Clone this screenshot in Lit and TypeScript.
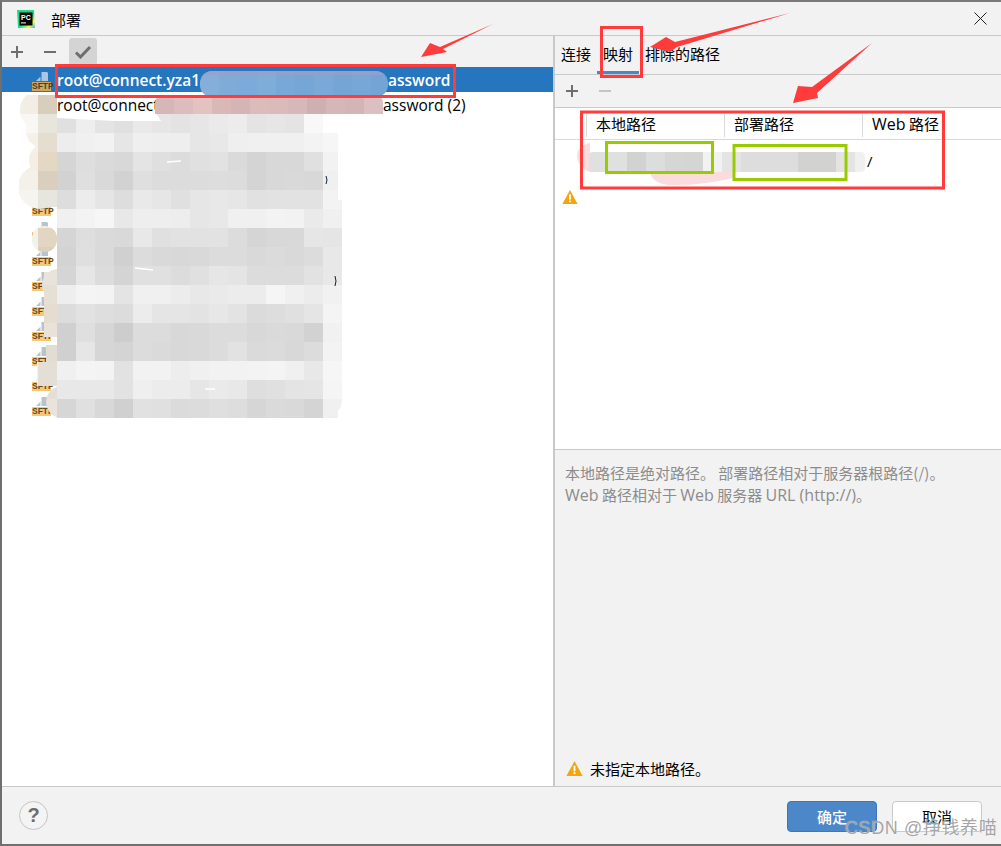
import { LitElement, html, css, svg } from "lit";
import { customElement } from "lit/decorators.js";

const GREY = [
  "e0 ee e4 e0 e9 e6 e3 e6 ea ec e4 e6 e4 f8 ff",
  "ed f0 f2 e6 ef ee ee e6 e8 ef f0 f0 f0 f3 f6",
  "d5 de da d8 e4 df dc e0 e2 da d4 d8 d8 e0 f2",
  "d2 df d9 d2 df dc dc dc dd dc d4 d8 d9 d8 f0",
  "dd ec e5 dd e9 e6 e0 e6 e8 e6 e1 e2 e2 e2 f3",
  "f0 f3 f6 e8 ee ee ed e6 e8 f0 f0 f3 f2 ea f0",
  "d5 de da d9 e8 e0 e2 e2 e2 dc d5 d8 d8 e6 e5",
  "d3 df da d0 dc d9 d8 d9 dc dc d9 db d9 dc e8",
  "d5 e6 dc d4 e0 e0 dc e0 e6 e4 dc dc dc e2 e8",
  "ee f4 f3 e4 f0 f0 ec e8 ea ec ec f5 f0 ec f1",
  "dc e2 de dc ec e5 e5 e3 e7 e3 db dd e0 e5 f4",
  "d0 df d6 cd dc dc d8 d9 dc dc d8 da d9 d2 f1",
  "d0 e6 d6 d4 dc da d8 d9 dc e2 da db d8 dc f3",
  "f0 f4 f3 e2 f2 f2 ed f0 f2 f2 f3 f4 f0 e8 f6",
  "e8 e8 e8 e2 ef ec ec e6 ea e8 de e0 e4 e5 f5",
  "d6 e0 d8 d0 e1 e0 db dc df dd d6 da d9 d4 f0",
].map((r) => r.split(" "));

const WARM: [number, string, string][] = [
  [95, "f2ede5", "d9cdbc"],
  [114, "f9f7f3", "e8e5dc"],
  [133, "f5f1e9", "e4ddd0"],
  [152, "f4eee4", "e4d8c5"],
  [171, "f4f1ea", "dacfbe"],
  [190, "f6f4ee", "e6e5de"],
  [209, "fafafa", "efefec"],
  [228, "f4f1ea", "e2d6c3"],
  [247, "f6f3ec", "dccfbb"],
  [266, "ffffff", "e8e4dc"],
  [285, "ffffff", "e6e0d4"],
  [304, "ffffff", "e4ddd0"],
  [323, "ffffff", "e8e2d8"],
  [342, "ffffff", "e2dcd2"],
  [361, "f6f3ec", "e4dfd6"],
  [380, "f8f5ef", "e4dfd6"],
  [399, "ffffff", "e8e4dc"],
];

const BLUE = ["86aedb", "7fabd9", "7caad9", "7fadd9", "78a8d7", "76a6d6", "7aa9d8", "74a5d5", "77a7d6", "72a4d5"];
const PINK = ["d6b7b7", "dcbcbc", "e3c2bf", "d9b8b6", "d4b4b4", "dcbcba", "dabbb9", "d7b8b8", "cfb0b0", "d6b7b8", "d3b5b6", "dcbfc0"];
const TABLE = ["e0e0e0", "e0e0e0", "d2d3d0", "dddddd", "d6d6d4", "d5d5d3", "f2f2f2", "e4e4e4", "dddddd", "dddddd", "dddddd", "d2d3d0", "d2d3d0", "e4e4e4", "f0f0f0"];

const warnIcon = (s: number) => html`<svg width=${s} height=${s} viewBox="0 0 16 16">
  <path d="M8 1 15.6 15H.4z" fill="#f2a50c" />
  <rect x="7.1" y="5.4" width="1.8" height="5.2" fill="#fff" />
  <rect x="7.1" y="11.5" width="1.8" height="1.8" fill="#fff" />
</svg>`;

const plus = (c: string) => html`<svg width="14" height="14" viewBox="0 0 14 14">
  <path d="M7 1v12M1 7h12" stroke=${c} stroke-width="2" fill="none" />
</svg>`;
const minus = (c: string) => html`<svg width="14" height="14" viewBox="0 0 14 14">
  <path d="M1 7h12" stroke=${c} stroke-width="2" fill="none" />
</svg>`;

@customElement("app-root")
export class AppRoot extends LitElement {
  static styles = css`
    :host {
      display: block;
      position: relative;
      width: 1001px;
      height: 846px;
      overflow: hidden;
      background: #f2f2f2;
      color: #000;
      font-family: "Open Sans", "Noto Sans CJK SC", sans-serif;
      font-size: 15px;
    }
    * { box-sizing: border-box; }
    .win {
      height: 846px;
      display: flex;
      flex-direction: column;
      border-left: 2px solid #6f6f6f;
      border-top: 2px solid #7a7a7a;
      border-bottom: 2px solid #6f6f6f;
    }
    .title {
      height: 34px;
      flex: none;
      display: flex;
      align-items: center;
      padding-left: 14px;
      gap: 15px;
      border-bottom: 1px solid #c9c9c9;
    }
    .title .txt { flex: 1; font-family: "Noto Sans CJK SC", sans-serif; padding-top: 1px; }
    .title .close { margin-right: 14px; display: block; }
    .main { flex: 1; display: flex; min-height: 0; }
    .left { width: 551px; flex: none; display: flex; flex-direction: column; }
    .tools { height: 31px; flex: none; display: flex; align-items: center; padding-left: 8px; }
    .tools .b { width: 33px; display: flex; align-items: center; justify-content: flex-start; }
    .check {
      width: 28px; height: 27px; background: #d4d4d4; border-radius: 3px;
      display: flex; align-items: center; justify-content: center; margin-left: -7px;
    }
    .list { flex: 1; background: #fff; }
    .row {
      height: 25px;
      display: flex;
      align-items: center;
      padding-left: 30px;
      white-space: nowrap;
      font-size: 15.5px;
    }
    .row.sel { background: #2675bf; color: #fff; font-weight: 600; }
    .row .name { margin-left: 6px; display: flex; padding-top: 1px; }
    .cut1 { width: 143px; }
    .cut2 { width: 98px; }
    .gap1 { width: 188px; }
    .gap2 { width: 228px; }
    .sftp { width: 19px; height: 19px; flex: none; display: flex; flex-direction: column; align-items: stretch; margin-top: 4px; }
    .sftp svg { display: block; margin-left: 4px; fill: #b9c3cc; }
    .sel .sftp svg { fill: #a9c6e4; }
    .sftp .lb {
      height: 9px; background: #f6c77a; color: #5d4a22; font: 700 8.5px/9px "Liberation Sans", sans-serif;
      text-align: center;
    }
    .sel .sftp .lb { background: #c8a862; color: #4d3e20; }
    .right {
      flex: 1; display: flex; flex-direction: column; min-width: 0;
      border-left: 2px solid #c9c9c9;
    }
    .tabs {
      height: 39px; flex: none; display: flex; border-bottom: 1px solid #c9c9c9;
      padding-left: 6px; font-family: "Noto Sans CJK SC", sans-serif; font-size: 15px;
    }
    .tab { height: 38px; padding: 7px 0 0; margin-right: 13px; line-height: 22px; }
    .tab.on { box-shadow: inset 0 -3px 0 #4a86c9; padding: 7px 6px 0; margin: 0 6px 0 -7px; }
    .rtools {
      height: 33px; flex: none; display: flex; align-items: center; padding-left: 10px; gap: 19px;
      border-bottom: 1px solid #c9c9c9;
    }
    .table { height: 342px; flex: none; background: #fff; border-bottom: 1px solid #c9c9c9; }
    .thead {
      height: 32px; display: grid; grid-template-columns: 31px 138px 138px 1fr;
      border-bottom: 1px solid #d9d9d9; font-family: "Noto Sans CJK SC", sans-serif; font-size: 15px;
    }
    .th { margin-top: 5px; height: 24px; line-height: 22px; padding-left: 9px; border-left: 1px solid #d9d9d9; }
    .th:first-child { border-left: 0; }
    .l { font-family: "Open Sans", sans-serif; font-size: 16px; }
    .trow { height: 41px; display: grid; grid-template-columns: 31px 138px 138px 1fr; align-items: center; font-size: 15px; }
    .trow span:last-child { padding-left: 5px; }
    .warn { padding: 8px 0 0 7px; }
    .warn svg { display: block; }
    .info { padding: 12px 0 0 10px; color: #8c8c8c; line-height: 22px; font-family: "Noto Sans CJK SC", sans-serif; font-size: 15px; flex: 1; }
    .err { height: 32px; flex: none; display: flex; align-items: center; gap: 7px; padding: 0 0 3px 11px; font-family: "Noto Sans CJK SC", sans-serif; font-size: 15px; }
    .foot {
      height: 58px; flex: none; border-top: 1px solid #c9c9c9; display: flex; align-items: flex-start;
      padding: 14px 19px 0 17px; gap: 15px;
    }
    .help {
      width: 29px; height: 29px; border-radius: 50%; border: 1px solid #c4c4c4; background: #f4f4f4;
      color: #6e6e6e; font: 700 20px/27px "Liberation Sans", sans-serif; text-align: center; margin-right: auto;
    }
    .btn {
      width: 90px; height: 31px; border-radius: 4px; border: 1px solid #c9c9c9; background: #fff;
      font-family: "Noto Sans CJK SC", sans-serif; font-size: 15px; line-height: 29px; text-align: center;
    }
    .btn.ok { background: #4b87c9; border-color: #3f76b4; color: #fff; font-weight: 500; }
    .over { position: absolute; left: 0; top: 0; pointer-events: none; display: block; }
    .mark {
      position: absolute; left: 845px; top: 816px; font: 18px/24px "Liberation Sans", "Noto Sans CJK SC", sans-serif;
      color: rgba(135, 135, 135, 0.75); text-shadow: 0 0 1px #fff; white-space: nowrap; letter-spacing: 0.6px;
    }
  `;

  private sftp() {
    return html`<div class="sftp">
      <svg width="12" height="10" viewBox="0 0 12 10">
        <path d="M0 9 4.5 4.5V9zM5.5 0H11l1 1v8H5.5z" />
      </svg>
      <div class="lb">SFTP</div>
    </div>`;
  }

  private mosaic() {
    const cells = [];
    GREY.forEach((r, j) =>
      r.forEach((c, i) => {
        cells.push(svg`<rect x=${57 + i * 19} y=${114 + j * 19} width="19" height="19" fill=${"#" + c + c + c} />`);
      })
    );
    WARM.forEach(([y, a, b]) => {
      cells.push(svg`<rect x="19" y=${y} width="19" height="19" fill=${"#" + a} />`);
      cells.push(svg`<rect x="38" y=${y} width="19" height="19" fill=${"#" + b} />`);
    });
    return svg`
      <defs>
        <clipPath id="blob">
          <rect x="57" y="114" width="266" height="304" />
          <rect x="323" y="133" width="15" height="285" />
          <circle cx="330" cy="170" r="8" /><circle cx="325" cy="225" r="16" />
          <circle cx="325" cy="265" r="17" /><circle cx="325" cy="400" r="17" />
          <rect x="323" y="200" width="19" height="200" />
          <circle cx="40" cy="110" r="20" /><circle cx="45" cy="130" r="19" />
          <circle cx="46" cy="160" r="17" /><circle cx="40" cy="187" r="22" />
          <rect x="38" y="95" width="19" height="112" />
          <rect x="32" y="226" width="25" height="26" rx="12" />
          <rect x="44" y="272" width="13" height="65" /><circle cx="58" cy="285" r="16" />
          <rect x="46" y="345" width="11" height="20" /><rect x="37" y="362" width="20" height="24" />
          <circle cx="62" cy="402" r="16" />
        </clipPath>
        <clipPath id="bluec"><rect x="200" y="71" width="188" height="26" rx="12" /></clipPath>
        <clipPath id="pinkc"><rect x="155" y="95" width="228" height="30" rx="8" /></clipPath>
        <clipPath id="tblc"><rect x="589" y="152" width="276" height="20" rx="4" /></clipPath>
      </defs>
      <g clip-path="url(#blob)">${cells}</g>
      <path d="M57 113H156L161 121H115L57 118Z" fill="#fff" />
      <g clip-path="url(#bluec)">
        ${BLUE.map((c, i) => svg`<rect x=${200 + i * 19} y="71" width="19" height="26" fill=${"#" + c} />`)}
        <rect x="200" y="71" width="188" height="4" fill="#a09cc4" opacity=".7" />
      </g>
      <g clip-path="url(#pinkc)">
        ${PINK.map((c, i) => svg`<rect x=${155 + i * 19} y="95" width="19" height="19" fill=${"#" + c} />`)}
      </g>
      <path d="M326 176q2 4 0 8M335 276q2 5 0 10" stroke="#123" stroke-width="1" fill="none" />
      <path d="M167 162l14-1M135 268l18 2M205 389l10 0" stroke="#fff" stroke-width="1.5" fill="none" />
      <path d="M590 143Q577 145 577 157Q578 168 590 172L650 172Q652 183 668 185Q700 186 733 178V172L590 170Z" fill="#fbdcdc" />
      <g clip-path="url(#tblc)">
        ${TABLE.map((c, i) => svg`<rect x=${589 + i * 19} y="152" width="19" height="20" fill=${"#" + c} />`)}
      </g>
      <g fill="none" stroke="#ff3b3b" stroke-width="3">
        <rect x="56.5" y="65.5" width="398" height="31" />
        <rect x="601.5" y="27.5" width="40" height="49" />
        <rect x="581.5" y="112" width="362" height="76" />
      </g>
      <g fill="none" stroke="#99cc00" stroke-width="3">
        <rect x="606.5" y="142.5" width="106" height="30" />
        <rect x="734" y="145.5" width="112" height="34" />
      </g>
      <g fill="#ff3b3b">
        <polygon points="493,24 440,47 430,43 421,57 447,52 443,49" />
        <polygon points="790,13 675,42 666,37 650,47 670,52 677,47" />
        <polygon points="872,43 812,87 798,86 793,103 818,98 817,93" />
      </g>`;
  }

  render() {
    const others = Array.from({ length: 12 });
    return html`
      <div class="win">
        <div class="title">
          <svg width="20" height="20" viewBox="0 0 20 20">
            <defs>
              <linearGradient id="pc" x1="0" y1="0" x2="1" y2="1">
                <stop offset="0" stop-color="#21d789" />
                <stop offset=".55" stop-color="#21d789" />
                <stop offset=".8" stop-color="#fcf84a" />
                <stop offset="1" stop-color="#07c3f2" />
              </linearGradient>
            </defs>
            <path d="M1 1h17l1 18H2z" fill="url(#pc)" />
            <rect x="3.5" y="3.5" width="13" height="13" fill="#000" />
            <rect x="5" y="13.4" width="5" height="1" fill="#fff" />
            <text x="5" y="10.5" font-size="7" font-weight="700" fill="#fff" font-family="Liberation Sans">PC</text>
          </svg>
          <div class="txt">部署</div>
          <svg class="close" width="13" height="13" viewBox="0 0 13 13">
            <path d="M.5.5l12 12M12.5.5l-12 12" stroke="#222" stroke-width="1" fill="none" />
          </svg>
        </div>
        <div class="main">
          <div class="left">
            <div class="tools">
              <div class="b">${plus("#6e6e6e")}</div>
              <div class="b">${minus("#6e6e6e")}</div>
              <div class="check">
                <svg width="18" height="14" viewBox="0 0 18 14">
                  <path d="M2 7.5 6.5 12 16 2" stroke="#6e6e6e" stroke-width="3" fill="none" />
                </svg>
              </div>
            </div>
            <div class="list">
              <div class="row sel">
                ${this.sftp()}
                <span class="name"><span class="cut1">root@connect.yza1</span><span class="gap1"></span><span>assword</span></span>
              </div>
              <div class="row">
                ${this.sftp()}
                <span class="name"><span class="cut2">root@connect</span><span class="gap2"></span><span>assword (2)</span></span>
              </div>
              ${others.map(() => html`<div class="row">${this.sftp()}</div>`)}
            </div>
          </div>
          <div class="right">
            <div class="tabs">
              <div class="tab">连接</div>
              <div class="tab on">映射</div>
              <div class="tab">排除的路径</div>
            </div>
            <div class="rtools">${plus("#6e6e6e")}${minus("#c4c4c4")}</div>
            <div class="table">
              <div class="thead">
                <div class="th"></div>
                <div class="th">本地路径</div>
                <div class="th">部署路径</div>
                <div class="th"><span class="l">Web</span> 路径</div>
              </div>
              <div class="trow"><span></span><span></span><span></span><span>/</span></div>
              <div class="warn">${warnIcon(16)}</div>
            </div>
            <div class="info">
              本地路径是绝对路径。 部署路径相对于服务器根路径(/)。<br />
              <span class="l">Web</span> 路径相对于 <span class="l">Web</span> 服务器 <span class="l">URL (http://)</span>。
            </div>
            <div class="err">${warnIcon(17)}<span>未指定本地路径。</span></div>
          </div>
        </div>
        <div class="foot">
          <div class="help">?</div>
          <div class="btn ok">确定</div>
          <div class="btn">取消</div>
        </div>
      </div>
      <svg class="over" width="1001" height="846" viewBox="0 0 1001 846">${this.mosaic()}</svg>
      <div class="mark">CSDN @挣钱养喵</div>
    `;
  }
}
